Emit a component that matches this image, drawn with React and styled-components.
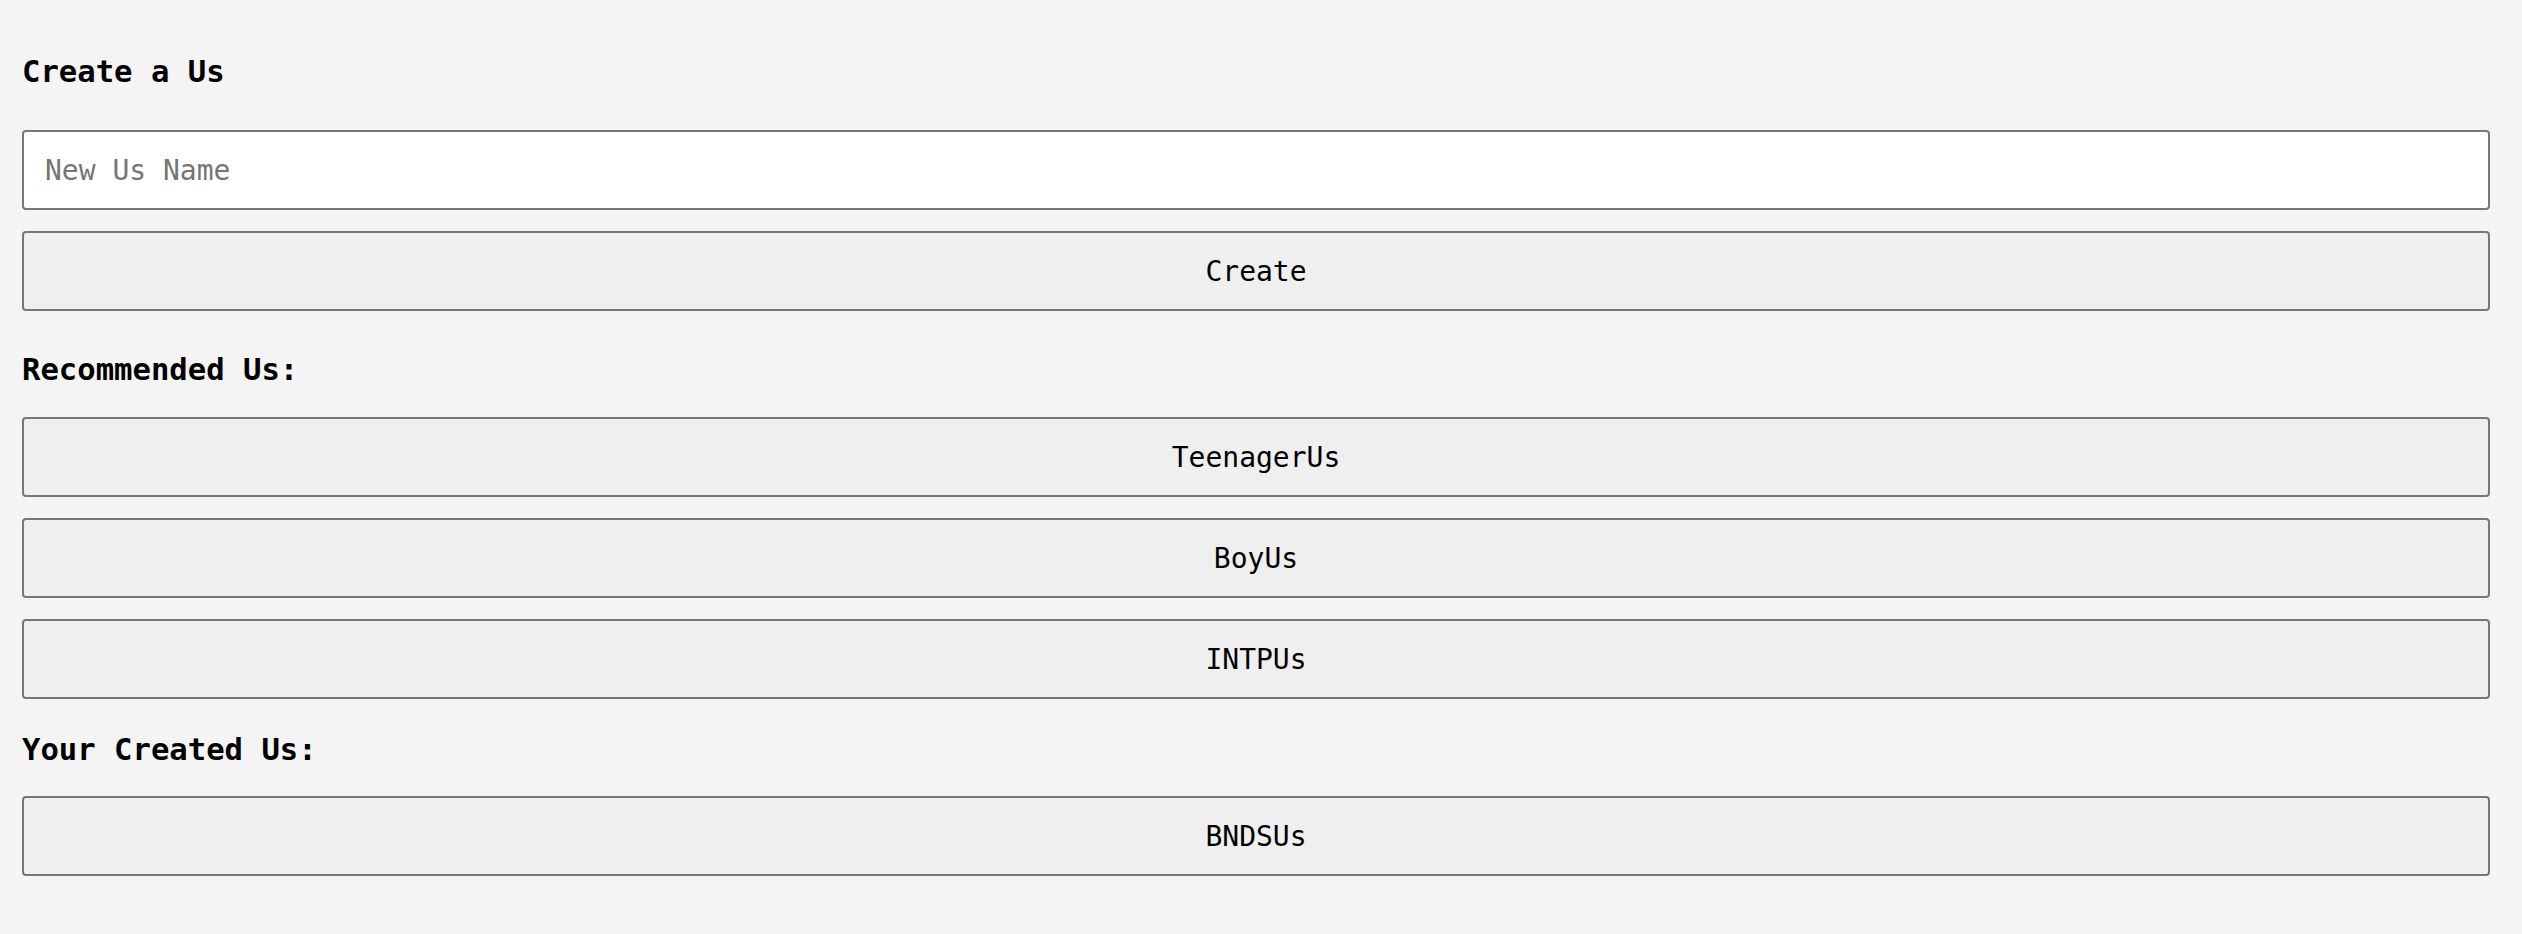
import React from "react";
import styled, { createGlobalStyle } from "styled-components";

const Global = createGlobalStyle`
  html, body {
    margin: 0;
    padding: 0;
    background: #f4f4f4;
  }
  body {
    font-family: "DejaVu Sans Mono", monospace;
    color: #000;
  }
  * { box-sizing: border-box; }
`;

const Page = styled.main`
  display: flex;
  flex-direction: column;
  padding: 0 32px 40px 22px;
  background: #f4f4f4;
  min-height: 934px;
`;

const Title = styled.h3`
  margin: ${(p) => p.$top}px 0 ${(p) => p.$bottom}px;
  font-family: "DejaVu Sans Mono", monospace;
  font-weight: bold;
  font-size: 30.6px;
  line-height: 35px;
  color: #000;
`;

const List = styled.div`
  display: flex;
  flex-direction: column;
  gap: 21px;
`;

const Input = styled.input`
  display: block;
  width: 100%;
  height: 80px;
  padding: 0 21px;
  border: 2px solid #777;
  border-radius: 4px;
  background: #fff;
  font-family: "DejaVu Sans Mono", monospace;
  font-size: 28px;
  color: #000;
  outline: none;
  &::placeholder {
    color: #757575;
  }
`;

const Button = styled.button`
  display: flex;
  align-items: center;
  justify-content: center;
  width: 100%;
  height: 80px;
  padding: 0;
  border: 2px solid #777;
  border-radius: 4px;
  background: #efefef;
  font-family: "DejaVu Sans Mono", monospace;
  font-size: 28px;
  color: #000;
  cursor: pointer;
`;

const recommended = ["TeenagerUs", "BoyUs", "INTPUs"];
const created = ["BNDSUs"];

export default function App() {
  return (
    <>
      <Global />
      <Page>
        <Title $top={54} $bottom={41}>Create a Us</Title>
        <List>
          <Input placeholder="New Us Name" />
          <Button>Create</Button>
        </List>
        <Title $top={41} $bottom={30}>Recommended Us:</Title>
        <List>
          {recommended.map((n) => (
            <Button key={n}>{n}</Button>
          ))}
        </List>
        <Title $top={33} $bottom={29}>Your Created Us:</Title>
        <List>
          {created.map((n) => (
            <Button key={n}>{n}</Button>
          ))}
        </List>
      </Page>
    </>
  );
}
